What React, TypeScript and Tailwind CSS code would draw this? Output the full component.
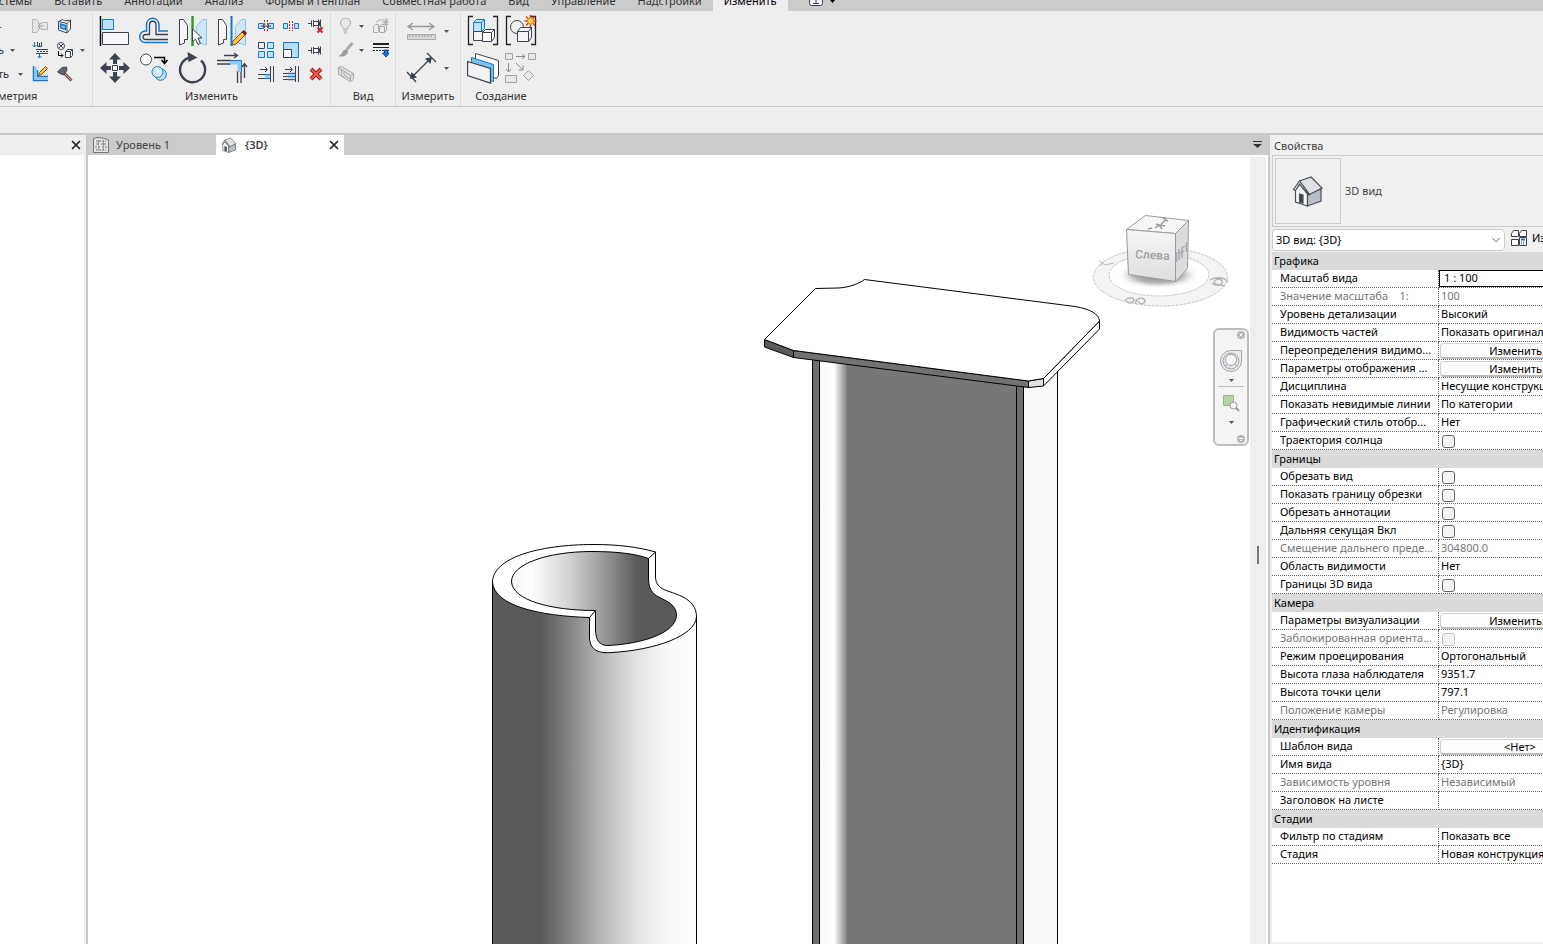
import type { ReactNode } from 'react';
import { ChevronDown, X } from 'lucide-react';

const DARK = '#3c4350';
const BLUE = '#0f7ad1';
const SKY = '#bfe3f5';
const GREY = '#a9a9a9';

interface IconProps {
  size?: 16 | 32;
  children: ReactNode;
}

const Icon = ({ size = 16, children }: IconProps) => (
  <svg
    width={size}
    height={size}
    viewBox={`0 0 ${size} ${size}`}
    fill="none"
    stroke={DARK}
    className="block shrink-0"
    aria-hidden="true"
  >
    {children}
  </svg>
);

const Tool = ({ label, children }: { label: string; children: ReactNode }) => (
  <button type="button" aria-label={label} className="block">
    {children}
  </button>
);

const Caret = ({ label = 'Ещё' }: { label?: string }) => (
  <button type="button" aria-label={label} className="flex h-4 w-2 items-center justify-center">
    <svg width="5" height="3" viewBox="0 0 5 3" fill="#555">
      <path d="M0 0h5L2.500 3z" />
    </svg>
  </button>
);

/* ---------- Geometry icons ---------- */

const CopeIcon = () => (
  <Icon>
    <path d="M.5 1.500h4l2 2v2h3v-1h6v7h-6v-1h-3v2l-2 2h-4z" stroke="#b5b5b5" fill="#e6e6e6" />
    <path d="M6 8h5M8 6 6 8l2 2" stroke="#999" />
  </Icon>
);

const CutIcon = () => (
  <Icon>
    <path d="M1.500 3.500 6 1.500l1.500 1.500 6-1v9l-3.500 4-8.500-3z" fill="#fff" />
    <path d="M10 5.500v9M1.500 3.500 10 5.500l3.500-3" />
    <path d="m3.500 6 5 1.500v4l-5-1.500z" fill="#7fc0ec" stroke={BLUE} strokeWidth="1.500" />
  </Icon>
);

const BeamIcon = () => (
  <Icon>
    <path d="M2.500 0v5M.5 3l2 2 2-2M7.500 12v4M5.500 14l2 2 2-2" stroke={BLUE} />
    <path d="M4 7.500h12M4 11.500h12" stroke={DARK} />
    <path d="M5 9.500h11" strokeDasharray="2 1" />
    <path d="M5.500 0v4.500h4V0M7.500 1v3" />
  </Icon>
);

const PaintIcon = () => (
  <Icon>
    <circle cx="4" cy="4" r="3.500" fill="#fff" />
    <path d="m2 2 4 4M6 2 2 6" />
    <path d="M1.500 9v4.500h4M4 11.500l2 2-2 2" stroke="#000" />
    <path d="M8.500 9.500 10.500 7.500h5v6l-2 2h-5z" fill="#fff" />
    <path d="M8.500 9.500h5v6M13.500 9.500l2-2" />
  </Icon>
);

const WallJoinIcon = () => (
  <Icon>
    <path d="M1.500 0v14.500H16M5.500 4v6.500H16" stroke={BLUE} strokeWidth="1.500" />
    <path d="M3.500 1v11.500H16" stroke="#7fc0ec" strokeWidth="2" />
    <path d="m6.500 9.500 1-3 6-6 2 2-6 6z" fill="#ffc64b" stroke="#7a4a12" />
  </Icon>
);

const HammerIcon = () => (
  <Icon>
    <path d="m7 7 7.500 7.500" stroke="#7a4a3c" strokeWidth="3" />
    <path d="m7 7 7 7" stroke="#dba894" />
    <path d="M.5 6 5 1.500 9.500 1 10 4 6.500 9 4 8z" fill="#5b6472" />
  </Icon>
);

/* ---------- Modify icons ---------- */

const AlignIcon = () => (
  <Icon size={32}>
    <path d="M1.500 1v30" stroke="#000" strokeWidth="1.500" />
    <path d="M3.500 4.500h11v10h-11z" fill={SKY} stroke={BLUE} />
    <path d="M3.500 17.500h26v12h-26z" fill="#f7f7f9" />
  </Icon>
);

const OffsetIcon = () => (
  <Icon size={32}>
    <path
      d="M30 27.500H7c-7 0-7-11 0-11.500h1.500V10c0-9 12.500-9 12.500 0v6H30"
      stroke={BLUE}
      strokeWidth="1.500"
    />
    <path d="M30 24.500H8c-4 0-4-5 0-5h3.500V10c0-5 6.500-5 6.500 0v9.500H30" strokeWidth="1.300" />
  </Icon>
);

const MirrorShape = () => (
  <>
    <path d="M2.500 4.500h4l4 6v14h-3v3.500l-5 2z" fill="#f6f6f8" />
    <path d="M29.500 4.500h-4l-6 7v13h3v3.500l7 2z" fill="#cfe8f7" stroke="#8cc3e6" />
  </>
);

const MirrorPickIcon = () => (
  <Icon size={32}>
    <MirrorShape />
    <path d="M15.500 1v30" stroke="#2d9a1c" strokeWidth="2.400" />
    <path d="M15.500 14v13l3-3 2.500 5.500 2.500-1-2.500-5.500h4z" fill="#fff" />
  </Icon>
);

const MirrorDrawIcon = () => (
  <Icon size={32}>
    <MirrorShape />
    <path d="M15.500 1v30" stroke={BLUE} strokeWidth="2" />
    <path d="m16 30 1-4L26 17l3 3-9 9z" fill="#ffc64b" stroke="#7a4a12" />
    <path d="m26 17 2-1.500 2.500 2.500L29 20z" fill="#8a1f1f" stroke="#7a1a1a" />
  </Icon>
);

const MoveIcon = () => (
  <Icon size={32}>
    <path
      d="m16 1 6 6.500h-4V12h-4V7.500h-4zM16 31l6-6.500h-4V20h-4v4.500h-4zM1 16l6.500-6v4H12v4H7.500v4zM31 16l-6.500-6v4H20v4h4.500v4z"
      fill={DARK}
      stroke="none"
    />
    <path d="M13.500 13.500h5v5h-5z" fill="#fff" />
  </Icon>
);

const CopyIcon = () => (
  <Icon size={32}>
    <circle cx="8" cy="7.500" r="5.500" fill="#fff" />
    <path d="M16 5.500h10.500V11M23.500 8l3 3.500 3-3.500" stroke="#000" strokeWidth="1.500" />
    <circle cx="22.500" cy="22.500" r="5.800" fill={SKY} stroke={BLUE} />
    <circle cx="19.500" cy="20" r="5.500" fill="#d9eef9" stroke={BLUE} />
  </Icon>
);

const RotateIcon = () => (
  <Icon size={32}>
    <path d="M24 8.500A12.500 12.500 0 1 1 13 5.500" strokeWidth="2.400" />
    <path d="M10.500 0 20.500 5.500 11.500 10z" fill={DARK} stroke="none" />
  </Icon>
);

const TrimIcon = () => (
  <Icon size={32}>
    <path d="M1 8.500h14M1 12h14M21.500 19v12M25 19v12" strokeWidth="1.300" />
    <path d="M14 10.500h9.500V20" stroke="#8ccbf5" strokeWidth="4" />
    <path d="M14 8.500h11.500V20" stroke={BLUE} />
    <path d="M8 3.500h13M18 1l3.500 2.500L18 6M28.500 26V12M26 15l2.500-3.500L31 15" strokeWidth="1.300" />
  </Icon>
);

const SplitIcon = () => (
  <Icon>
    <path d="M.5 5.500h5v5h-5zM10.500 5.500h5v5h-5z" fill={SKY} stroke={BLUE} />
    <path d="M6.500 2v12M9.500 2v12" stroke="#d02020" strokeDasharray="2 1" />
    <path d="M3 8h10" />
  </Icon>
);

const SplitGapIcon = () => (
  <Icon>
    <path d="M.5 5.500h4v5h-4zM11.500 5.500h4v5h-4z" fill={SKY} stroke={BLUE} />
    <path d="M6.500 3v10M9.500 3v10" stroke="#d02020" strokeDasharray="2 1" />
  </Icon>
);

const Pin = () => (
  <>
    <path d="M5.500 6.500h6v4h-6z" fill="#f4f4f4" />
    <path d="M0 8.500h3.500M3.500 5.500v6M5.500 5v7M10.500 4.500v8M12.500 4.500v8" />
  </>
);

const UnpinIcon = () => (
  <Icon>
    <g transform="translate(0 -3)">
      <Pin />
    </g>
    <path d="m9.500 9.500 5 5M14.500 9.500l-5 5" stroke="#cf1f1f" strokeWidth="2" />
  </Icon>
);

const PinIcon = () => (
  <Icon>
    <Pin />
  </Icon>
);

const ArrayIcon = () => (
  <Icon>
    <path d="M.5.5h6v6h-6z" />
    <path d="M9.500.5h6v6h-6zM.5 9.500h6v6h-6zM9.500 9.500h6v6h-6z" fill={SKY} stroke={BLUE} />
  </Icon>
);

const ScaleIcon = () => (
  <Icon>
    <path d="M.5.5h15v15H.5z" fill="#b4ddf5" stroke={BLUE} />
    <path d="M.5 7.500h8v8h-8z" fill="#fff" />
  </Icon>
);

const ExtendIcon = () => (
  <Icon>
    <path d="M2 3.500h7M7 1l2.500 2.500L7 6M12.500 0v16M15.500 0v16M0 8.500h7M0 12.500h7" />
    <path d="M7 8.500h5M7 12.500h5" stroke={BLUE} />
    <path d="M7 10.500h5" stroke="#8ccbf5" strokeWidth="3" />
  </Icon>
);

const ExtendManyIcon = () => (
  <Icon>
    <path d="M2 3.500h7M7 1l2.500 2.500L7 6M12.500 0v16M15.500 0v16M0 7.500h5M0 10.500h5M0 13.500h5" />
    <path d="M5 7.500h7M5 10.500h7M5 13.500h7" stroke={BLUE} strokeWidth="1.500" />
  </Icon>
);

const DeleteIcon = () => (
  <Icon>
    <path d="m3 3 10 10M13 3 3 13" stroke="#a01818" strokeWidth="4" />
    <path d="m3 3 10 10M13 3 3 13" stroke="#f0584e" strokeWidth="2" />
  </Icon>
);

/* ---------- View, measure and create icons ---------- */

const BulbIcon = () => (
  <Icon>
    <path d="M5.500 11c0-2-3-3-3-6a5 5 0 0 1 10 0c0 3-3 4-3 6zM5.500 13h4M6 15h3" stroke={GREY} fill="#e8e8e8" />
  </Icon>
);

const DisplaceIcon = () => (
  <Icon>
    <path d="M.5 8.500 2.500 6.500h3v7l-1 1h-4zM6.500 8.500l2-2h5v6l-2 2h-5zM6.500 8.500h5v6M3 4.500 6 2h3" stroke={GREY} />
    <path d="M13 0v8M9 4h7M10 1l5 6M15 1l-5 6" stroke="#aaa" />
  </Icon>
);

const BrushIcon = () => (
  <Icon>
    <path d="m14.500 1-6 7" stroke={GREY} strokeWidth="3" />
    <path d="M8 7.500c-4 0-3 5-7.500 6.500 4 1.500 9 0 9.500-4.500z" fill="#9b9b9b" stroke="none" />
  </Icon>
);

const LineworkIcon = () => (
  <Icon>
    <path d="M0 2h16" stroke="#222" strokeWidth="2" />
    <path d="M0 5.500h16" stroke="#222" />
    <path d="M0 8.500h16" stroke="#222" strokeDasharray="2 1" />
    <path d="M11.500 8h3v3h2L13 15l-3.500-4h2z" fill={BLUE} stroke="#0b4f9c" />
  </Icon>
);

const SectionBoxIcon = () => (
  <Icon>
    <path d="M.5 1.500 3.500 0.500l12 7v6l-3 2-12-7zM.5 1.500l12 8v6M12.500 9.500l3-2M3.500 3.500v6l3 2M6 5v4l6 4" stroke={GREY} fill="#e0e0e0" />
  </Icon>
);

const MeasureIcon = () => (
  <Icon size={32}>
    <path d="M3 11.500h26M8 8l-5 3.500L8 15M24 8l5 3.500-5 3.500" stroke="#999" strokeWidth="1.300" />
    <path d="M2.500 19.500h28v5h-28z" fill="#d9d9d9" stroke={GREY} />
    <path d="M5 20v2M8 20v2M11 20v2M14 20v2M17 20v2M20 20v2M23 20v2M26 20v2" stroke="#999" />
  </Icon>
);

const DimensionIcon = () => (
  <Icon size={32}>
    <path d="m6 26 20-20M2 20l9 10M22 1l9 9" strokeWidth="1.300" />
    <path d="m5 27 1.500-7 5.500 5.500zM27 5l-7 1.500 5.500 5.500z" fill={DARK} stroke="none" />
  </Icon>
);

const Brackets = () => (
  <path d="M6 1.500H1.500v28H6M26 1.500h4.500v28H26" stroke="#222" strokeWidth="1.300" />
);

const GroupIcon = () => (
  <Icon size={32}>
    <Brackets />
    <path d="m6.500 7.500 3-3h8v9l-3 3h-8z" fill={SKY} stroke={BLUE} />
    <path d="M6.500 7.500h8v9M14.500 7.500l3-3" stroke={BLUE} />
    <path d="M6.500 16.500h9v9h-9z" fill="#f4f4f6" />
    <path d="m15.500 17.500 3-3h9v8l-3 4h-9z" fill="#fff" />
    <path d="M15.500 17.500h9v9M24.500 17.500l3-3" />
  </Icon>
);

const AssemblyIcon = () => (
  <Icon size={32}>
    <Brackets />
    <circle cx="12" cy="12" r="6.500" fill="#f1f1f4" />
    <path d="m12.500 16.500 3-4h11v10l-3 4h-11z" fill="#f4f4f6" />
    <path d="M12.500 16.500h11v10M23.500 16.500l3-4" />
    <path d="M25.500 0v12M19.500 6h12M21 1.500l9 9M30 1.500l-9 9" stroke="#d8401a" strokeWidth="1.500" />
    <circle cx="25.500" cy="6" r="3" fill="#ffd83a" stroke="#ef7a1a" />
  </Icon>
);

const PartsIcon = () => (
  <Icon size={32}>
    <path d="m8.500 1.500 23 7v15l-2 3-21-7z" fill="#fff" />
    <path d="m4.500 5.500 22 7v17l-22-7z" fill="#7cc2f0" stroke={BLUE} />
    <path d="m.5 9.500 23 7V31l-23-7.500z" fill="#f3f3f5" strokeWidth="1.300" />
  </Icon>
);

const SimilarIcon = () => (
  <Icon size={32}>
    <g stroke="#a3a3a3">
      <path d="M.5 1.500h7v6h-7zM23.500 1.500h7v6h-7zM.5 23.500h11v7H.5zM23.500 18.500l5 5-5 5-5-5z" fill="#e8e8e8" />
      <path d="M11 4.500h9M17 2l3 2.500L17 7M3.500 11v9M1 17l2.500 3L6 17M11 11l7 7M18 13.500V18h-4.500" stroke="#8c8c8c" />
    </g>
  </Icon>
);

/* ---------- Shared glyphs ---------- */

const HouseIcon = ({ className }: { className: string }) => (
  <svg viewBox="0 0 32 32" className={className} fill="none" stroke="#4a4f58" strokeWidth="1.200">
    <path d="M3.500 14.500v12.500l12 4V19L8 9z" fill="#f8f8fa" />
    <path d="M15.500 18.500V31L29 26V14z" fill="#b9bec8" />
    <path d="M7.500 6 19 2l11 11-12.500 6.500z" fill="#dfe1e6" />
    <path d="M7.500 6 1.500 14.500l2 1 4-6.500 9 11 1-.5z" fill="#fff" />
    <path d="M7.500 19l3.500 1v8l-3.500-1z" fill="#3c4350" />
  </svg>
);

const PlanIcon = () => (
  <Icon>
    <g stroke="#777">
      <path d="M.5 15.500V1.500L4 .5l6 .5 5.500 2v12.500z" fill="#e4e4e4" />
      <path d="M3 4h10M3 7h3M8 7h6M2 10h5M9 10h5M3 13h10" strokeDasharray="2 1" />
      <path d="M5.500 3v10M10.500 3v11" stroke="#999" />
    </g>
  </Icon>
);

/* ---------- Ribbon ---------- */

const ribbonTabs = [
  'Системы',
  'Вставить',
  'Аннотации',
  'Анализ',
  'Формы и генплан',
  'Совместная работа',
  'Вид',
  'Управление',
  'Надстройки',
];

const RibbonTabs = () => (
  <nav className="flex h-[11px] items-end overflow-hidden bg-[#cbcbcb] text-[#333]">
    <div className="-ml-[26px] flex shrink-0">
      {ribbonTabs.map((tab) => (
        <button key={tab} type="button" className="h-5 px-[11px] leading-4 whitespace-nowrap">
          {tab}
        </button>
      ))}
    </div>
    <button type="button" className="h-5 bg-[#eee] px-[11px] leading-4 text-black">
      Изменить
    </button>
    <button type="button" aria-label="Свернуть ленту" className="ml-5 flex h-5 items-center gap-1.5">
      <svg width="16" height="14" viewBox="0 0 16 14" fill="#f4f6fa" stroke={DARK}>
        <rect x="1.500" y=".5" width="13" height="11" rx="2" />
        <path d="M8 4v5M5 9.500h6" />
      </svg>
      <svg width="5" height="3" viewBox="0 0 5 3">
        <path d="M0 0h5L2.500 3z" />
      </svg>
    </button>
  </nav>
);

interface GroupProps {
  title: string;
  className: string;
  children: ReactNode;
}

const Group = ({ title, className, children }: GroupProps) => (
  <section className={`flex shrink-0 flex-col ${className}`}>
    <div className="flex h-[75px]">{children}</div>
    <h2 className="text-center leading-4">{title}</h2>
  </section>
);

const Ribbon = () => (
  <div className="flex h-24 overflow-hidden border-b border-[#c8c8c8] bg-[#eee] pt-0.5 text-[#333]">
    <section className="flex w-[93px] shrink-0 flex-col border-r border-[#dcdcdc]">
      <div className="-ml-0.5 flex h-[75px] pt-[5px]">
        <div className="flex w-[34px] flex-col gap-2">
          <span className="h-4 leading-4">-</span>
          <span className="flex h-4 items-center justify-between pr-4 leading-4">
            ь<Caret />
          </span>
          <span className="flex h-4 items-center justify-between pr-2 leading-4">
            ть<Caret />
          </span>
        </div>
        <div className="grid h-16 grid-cols-[25px_16px_18px] gap-y-2">
          <Tool label="Врезка"><CopeIcon /></Tool>
          <Tool label="Вырезать"><CutIcon /></Tool>
          <span />
          <Tool label="Соединение балок"><BeamIcon /></Tool>
          <Tool label="Краска"><PaintIcon /></Tool>
          <span className="flex justify-center"><Caret /></span>
          <Tool label="Соединение стен"><WallJoinIcon /></Tool>
          <Tool label="Разобрать"><HammerIcon /></Tool>
        </div>
      </div>
      <h2 className="-ml-0.5 leading-4">метрия</h2>
    </section>

    <Group title="Изменить" className="w-[238px] border-r border-[#dcdcdc]">
      <div className="grid h-[70px] grid-cols-[39px_39px_39px_39px] gap-y-[5px] pt-0.5 pl-1.5">
        <Tool label="Выровнять"><AlignIcon /></Tool>
        <Tool label="Смещение"><OffsetIcon /></Tool>
        <Tool label="Зеркало: выбрать ось"><MirrorPickIcon /></Tool>
        <Tool label="Зеркало: нарисовать ось"><MirrorDrawIcon /></Tool>
        <Tool label="Перенести"><MoveIcon /></Tool>
        <Tool label="Копировать"><CopyIcon /></Tool>
        <Tool label="Повернуть"><RotateIcon /></Tool>
        <Tool label="Обрезать до угла"><TrimIcon /></Tool>
      </div>
      <div className="grid h-[69px] grid-cols-[25px_25px_16px] gap-y-2 pt-[5px] pl-[3px]">
        <Tool label="Разделить"><SplitIcon /></Tool>
        <Tool label="Разделить с зазором"><SplitGapIcon /></Tool>
        <Tool label="Открепить"><UnpinIcon /></Tool>
        <Tool label="Массив"><ArrayIcon /></Tool>
        <Tool label="Масштаб"><ScaleIcon /></Tool>
        <Tool label="Прикрепить"><PinIcon /></Tool>
        <Tool label="Удлинить"><ExtendIcon /></Tool>
        <Tool label="Удлинить несколько"><ExtendManyIcon /></Tool>
        <Tool label="Удалить"><DeleteIcon /></Tool>
      </div>
    </Group>

    <Group title="Вид" className="w-[65px] border-r border-[#dcdcdc]">
      <div className="grid h-[69px] grid-cols-[19px_16px_16px] gap-y-2 pt-[5px] pl-[7px]">
        <Tool label="Скрыть"><BulbIcon /></Tool>
        <Caret />
        <Tool label="Сместить"><DisplaceIcon /></Tool>
        <Tool label="Переопределить"><BrushIcon /></Tool>
        <Caret />
        <Tool label="Вид линий"><LineworkIcon /></Tool>
        <Tool label="Границы"><SectionBoxIcon /></Tool>
      </div>
    </Group>

    <Group title="Измерить" className="w-[65px] border-r border-[#dcdcdc]">
      <div className="grid h-[71px] grid-cols-[37px_8px] items-center gap-y-[5px] pt-0.5 pl-[9px]">
        <Tool label="Измерить расстояние"><MeasureIcon /></Tool>
        <Caret />
        <Tool label="Размер"><DimensionIcon /></Tool>
        <Caret />
      </div>
    </Group>

    <Group title="Создание" className="w-20">
      <div className="grid h-[71px] grid-cols-[38px_32px] gap-y-[5px] pt-0.5 pl-1.5">
        <Tool label="Создать группу"><GroupIcon /></Tool>
        <Tool label="Создать сборку"><AssemblyIcon /></Tool>
        <Tool label="Создать части"><PartsIcon /></Tool>
        <Tool label="Создать похожий"><SimilarIcon /></Tool>
      </div>
    </Group>
  </div>
);

/* ---------- Drawing area ---------- */

const Model = () => (
  <svg className="block h-full w-full" fill="none" stroke="#000" aria-label="3D модель">
    <defs>
      <linearGradient id="pipeOuter" gradientUnits="userSpaceOnUse" x1="492" x2="697" y1="0" y2="0">
        <stop offset="0" stopColor="#5a5a5a" />
        <stop offset=".24" stopColor="#5a5a5a" />
        <stop offset=".4" stopColor="#8c8c8c" />
        <stop offset=".55" stopColor="#bcbcbc" />
        <stop offset=".72" stopColor="#e6e6e6" />
        <stop offset=".88" stopColor="#fafafa" />
        <stop offset="1" stopColor="#fff" />
      </linearGradient>
      <linearGradient id="pipeInner" gradientUnits="userSpaceOnUse" x1="511" x2="677" y1="0" y2="0">
        <stop offset="0" stopColor="#f4f4f4" />
        <stop offset=".12" stopColor="#fff" />
        <stop offset=".35" stopColor="#d2d2d2" />
        <stop offset=".55" stopColor="#9c9c9c" />
        <stop offset=".76" stopColor="#5a5a5a" />
        <stop offset="1" stopColor="#5a5a5a" />
      </linearGradient>
      <linearGradient id="web" gradientUnits="userSpaceOnUse" x1="820" x2="848" y1="0" y2="0">
        <stop offset="0" stopColor="#fafafa" />
        <stop offset=".5" stopColor="#fff" />
        <stop offset="1" stopColor="#777" />
      </linearGradient>
      <radialGradient id="cubeShadow">
        <stop offset="0" stopColor="#777" />
        <stop offset=".6" stopColor="#bbb" />
        <stop offset="1" stopColor="#fff" stopOpacity="0" />
      </radialGradient>
      <linearGradient id="cubeFace" x1="0" x2="0" y1="0" y2="1">
        <stop offset="0" stopColor="#f6f6f6" />
        <stop offset="1" stopColor="#dedede" />
      </linearGradient>
    </defs>

    <g transform="translate(-88 -155)">
      {/* Pipe */}
      <path d="M492.500 582V2000H696.500V616L640 600H520z" fill="url(#pipeOuter)" />
      <path
        d="M492.500 582C493 558 538 544.500 594 544.500C618 544.500 638 547 655.500 552V577C656 591 669 590 682 596.500C691 601 696.500 607 696.500 617C695 636 655 650 612 652.500C596 654 589.500 648 589.500 637V617.500C540 616 494 606 492.500 582z"
        fill="#fff"
      />
      <path
        d="M648.500 558.500C636 554 618 551.500 592 551.500C548 551.500 511 564 511.500 582C513 600 550 610.500 595.500 610.500V630C596 640 599 645.500 608 645.500C640 644 676 634 676.500 615C676 603 664 600.500 656 595.500C650 591 648.500 586 648.500 577z"
        fill="url(#pipeInner)"
      />
      <path d="m648.500 558.500 7-6.500M589.500 617.500l6-7" />

      {/* Column */}
      <path d="M1024 340h33.500v1660H1024z" fill="#fafafa" stroke="none" />
      <path d="M812 355h8v1700h-8zM1017 370h7v1700h-7z" fill="#6e6e6e" stroke="none" />
      <path d="M820 355h28v1700h-28z" fill="url(#web)" stroke="none" />
      <path d="M847 355h170v1700H847z" fill="#777" stroke="none" />
      <path
        d="M812.500 355v1700M819.500 355v1700M1016.500 370v1700M1023.500 370v1700M1057.500 370v1700"
        shapeRendering="crispEdges"
      />

      {/* Base plate */}
      <path d="M764.500 339.500V347L793.500 357.500V350.500z" fill="#5a5a5a" />
      <path d="M793.500 350.500V357.500L1028.500 387.500V381z" fill="#727272" />
      <path d="M1028.500 381V387.500L1043.500 386V378.500z" fill="#e2e2e2" />
      <path d="M1043.500 378.500V386L1099.500 329V321z" fill="#fff" />
      <path
        d="M764.500 339.500L815.500 288.500L838 288C850 287.500 860 283 864.500 279.500L1075 306.500C1090 309 1099 314 1099.500 321L1043.500 378.500L1028.500 381L793.500 350.500z"
        fill="#fff"
      />

      {/* View cube */}
      <ellipse cx="1160.500" cy="277" rx="67" ry="29" fill="#f4f4f4" stroke="#c4c4c4" strokeDasharray="3 1" />
      <ellipse cx="1159" cy="275" rx="50" ry="21" fill="#fff" stroke="#c4c4c4" strokeDasharray="3 1" />
      <ellipse cx="1158" cy="275" rx="42" ry="14" fill="url(#cubeShadow)" stroke="none" />
      <g stroke="#9a9a9a">
        <path d="M1126.500 229.500L1145.500 215.500L1188.500 220.500L1175.500 233.500z" fill="#f6f6f6" />
        <path d="M1126.500 229.500L1175.500 233.500V281.500L1128.500 274.500z" fill="url(#cubeFace)" />
        <path d="M1175.500 233.500L1188.500 220.500L1187.500 268.500L1175.500 281.500z" fill="#dcdcdc" />
        <path d="M1155 228l4-3-3-1M1160 225l5 1M1161 224l5-4 2 1M1162 229l-3-4M1148 229l4-1M1163 219l3-1" strokeWidth="1.500" />
        <path d="M1099 261l6 4 9-2M1100 266l4-4" stroke="#bbb" />
        <path d="M1125 301c2-4 9-4 9-1s-8 4-6 1M1136 304c-2-6 8-8 9-3 0 4-8 3-6 0" stroke="#b5b5b5" strokeWidth="1.500" />
        <path d="M1210 280c6-4 14-2 16 0M1212 283c4 4 12 2 10-2s-10-1-7 3l10 2M1225 279l3 3" stroke="#b5b5b5" strokeWidth="1.500" />
      </g>
      <text
        x="1135"
        y="259"
        fontSize="12"
        fontWeight="500"
        fill="#9aa0a6"
        stroke="none"
        transform="rotate(3 1150 259)"
        className="font-['Roboto',sans-serif]"
      >
        Слева
      </text>
      <path d="M1176.500 262v-10M1179 260v-11M1179 254l3-2M1182 258v-10l3-2M1182 252l2-1M1186.500 252v-10" stroke="#a5a9ae" strokeWidth="1.500" />
    </g>
  </svg>
);

const NavigationBar = () => (
  <div className="absolute top-[173px] right-px flex h-[118px] w-9 flex-col items-center rounded-md border-2 border-[#bdbdbd] bg-[#f4f4f4]">
    <button type="button" aria-label="Закрыть" className="mt-px mr-0.5 self-end">
      <svg width="8" height="8" viewBox="0 0 8 8" stroke="#fff">
        <circle cx="4" cy="4" r="4" fill="#b5b5b5" stroke="none" />
        <path d="m2.500 2.500 3 3M5.500 2.500l-3 3" />
      </svg>
    </button>
    <button type="button" aria-label="Штурвал" className="mt-2.5">
      <svg width="24" height="24" viewBox="0 0 24 24" fill="#eceef0" stroke="#a0a4a8">
        <path d="M12 1.500h10.500V12A10.500 10.500 0 1 1 12 1.500z" />
        <circle cx="12" cy="12" r="8" fill="#e4e6e9" />
        <circle cx="12" cy="11" r="5.500" fill="#f8f8f8" />
        <path d="m8 15-2 3M16 15l2 3" />
      </svg>
    </button>
    <span className="mt-px flex h-3 items-center"><Caret /></span>
    <hr className="w-[26px] border-[#bdbdbd]" />
    <button type="button" aria-label="Зумирование" className="mt-[7px]">
      <svg width="18" height="18" viewBox="0 0 18 18">
        <path d="M1.500 1.500h10v10h-10z" fill="#b9d3a8" stroke="#8eb87c" />
        <circle cx="11.500" cy="11.500" r="3.500" fill="#f8f8f8" stroke="#999" />
        <path d="m14 14 3 3" stroke="#999" strokeWidth="2" />
      </svg>
    </button>
    <span className="mt-1 flex h-3 items-center"><Caret /></span>
    <button type="button" aria-label="Параметры" className="mt-auto mr-0.5 mb-px self-end">
      <svg width="8" height="8" viewBox="0 0 8 8" stroke="#fff">
        <circle cx="4" cy="4" r="4" fill="#b5b5b5" stroke="none" />
        <path d="M2 3.500h4M3 5.500h2" />
      </svg>
    </button>
  </div>
);

const Workspace = () => (
  <main className="flex min-w-0 flex-1 flex-col">
    <div className="flex h-5 items-center bg-[#cbcbcb] text-[#444]">
      <button type="button" className="flex h-5 w-32 items-center gap-[7px] pl-[5px] leading-5">
        <PlanIcon />
        Уровень 1
      </button>
      <div className="flex h-5 w-32 items-center justify-between bg-white pr-[3px] pl-[5px] font-semibold">
        <button type="button" className="flex items-center gap-2 leading-5">
          <HouseIcon className="h-4 w-4" />
          {'{3D}'}
        </button>
        <button type="button" aria-label="Закрыть вид">
          <X className="h-3.5 w-3.5 text-[#222]" strokeWidth={3} />
        </button>
      </div>
      <button type="button" aria-label="Список видов" className="mr-1.5 ml-auto">
        <svg width="9" height="8" viewBox="0 0 9 8" fill="#333">
          <path d="M0 0h9v1H0zM0 3h9L4.500 7z" />
        </svg>
      </button>
    </div>
    <div className="flex flex-1 bg-white">
      <div className="relative min-w-0 flex-1 overflow-hidden">
        <div className="absolute inset-0">
          <Model />
        </div>
        <NavigationBar />
      </div>
      <div className="mt-0.5 mr-0.5 flex w-4 items-center justify-center bg-[#efefef] pt-2">
        <span className="h-[18px] w-0.5 bg-[#777]" />
      </div>
    </div>
  </main>
);

/* ---------- Properties palette ---------- */

interface Property {
  name: string;
  value?: string;
  kind?: 'text' | 'input' | 'button' | 'check';
  disabled?: boolean;
}

const sections: { title: string; rows: Property[] }[] = [
  {
    title: 'Графика',
    rows: [
      { name: 'Масштаб вида', value: '1 : 100', kind: 'input' },
      { name: 'Значение масштаба    1:', value: '100', disabled: true },
      { name: 'Уровень детализации', value: 'Высокий' },
      { name: 'Видимость частей', value: 'Показать оригинал' },
      { name: 'Переопределения видимо...', value: 'Изменить...', kind: 'button' },
      { name: 'Параметры отображения ...', value: 'Изменить...', kind: 'button' },
      { name: 'Дисциплина', value: 'Несущие конструкции' },
      { name: 'Показать невидимые линии', value: 'По категории' },
      { name: 'Графический стиль отобр...', value: 'Нет' },
      { name: 'Траектория солнца', kind: 'check' },
    ],
  },
  {
    title: 'Границы',
    rows: [
      { name: 'Обрезать вид', kind: 'check' },
      { name: 'Показать границу обрезки', kind: 'check' },
      { name: 'Обрезать аннотации', kind: 'check' },
      { name: 'Дальняя секущая Вкл', kind: 'check' },
      { name: 'Смещение дальнего преде...', value: '304800.0', disabled: true },
      { name: 'Область видимости', value: 'Нет' },
      { name: 'Границы 3D вида', kind: 'check' },
    ],
  },
  {
    title: 'Камера',
    rows: [
      { name: 'Параметры визуализации', value: 'Изменить...', kind: 'button' },
      { name: 'Заблокированная ориента...', kind: 'check', disabled: true },
      { name: 'Режим проецирования', value: 'Ортогональный' },
      { name: 'Высота глаза наблюдателя', value: '9351.7' },
      { name: 'Высота точки цели', value: '797.1' },
      { name: 'Положение камеры', value: 'Регулировка', disabled: true },
    ],
  },
  {
    title: 'Идентификация',
    rows: [
      { name: 'Шаблон вида', value: '<Нет>', kind: 'button' },
      { name: 'Имя вида', value: '{3D}' },
      { name: 'Зависимость уровня', value: 'Независимый', disabled: true },
      { name: 'Заголовок на листе', value: '' },
    ],
  },
  {
    title: 'Стадии',
    rows: [
      { name: 'Фильтр по стадиям', value: 'Показать все' },
      { name: 'Стадия', value: 'Новая конструкция' },
    ],
  },
];

const PropertyValue = ({ id, row }: { id: string; row: Property }) => {
  if (row.kind === 'check') {
    return (
      <input
        id={id}
        type="checkbox"
        disabled={row.disabled}
        className="mt-[3px] ml-[3px] h-[13px] w-[13px] appearance-none rounded-[3px] border border-[#666] bg-[#f5f5f5] disabled:border-[#c4c4c4]"
      />
    );
  }
  if (row.kind === 'button') {
    return (
      <button
        id={id}
        type="button"
        className="mt-px ml-px h-4 w-40 rounded-sm border border-b-2 border-[#d0d0d0] border-b-[#bbb] bg-[#fdfdfd] leading-[14px]"
      >
        {row.value}
      </button>
    );
  }
  if (row.kind === 'input') {
    return (
      <input
        id={id}
        defaultValue={row.value}
        className="h-[17px] w-40 border border-black bg-white px-1 pb-0.5 leading-4 outline-none"
      />
    );
  }
  return <output id={id} className="h-4 pl-0.5 leading-4">{row.value}</output>;
};

const PropertyTable = () => (
  <table className="w-[328px] table-fixed border-separate border-spacing-0 text-left">
    <colgroup>
      <col className="w-[167px]" />
      <col />
    </colgroup>
    {sections.map((section, s) => (
      <tbody key={section.title}>
        <tr className="h-[18px] bg-[#dadada]">
          <th colSpan={2} className="p-0 pl-0.5 leading-[18px] font-normal">
            {section.title}
          </th>
        </tr>
        {section.rows.map((row, r) => {
          const id = `prop-${s}-${r}`;
          return (
            <tr key={row.name} className={row.disabled ? 'h-[18px] text-[#777]' : 'h-[18px]'}>
              <th className="border-r border-b border-dotted border-[#666] p-0 pl-2 align-top font-normal">
                <label htmlFor={id} className="block h-[17px] overflow-hidden leading-4 whitespace-pre">
                  {row.name}
                </label>
              </th>
              <td className="border-b border-dotted border-[#666] p-0 align-top whitespace-nowrap">
                <div className="flex h-[17px] items-start">
                  <PropertyValue id={id} row={row} />
                </div>
              </td>
            </tr>
          );
        })}
      </tbody>
    ))}
  </table>
);

const PropertiesPanel = () => (
  <aside className="flex w-[275px] shrink-0 flex-col overflow-hidden border-l-2 border-[#c8c8c8] bg-[#f0f0f0] pl-0.5">
    <h2 className="h-5 pl-0.5 leading-[22px] text-[#444]">Свойства</h2>
    <div className="flex h-[72px] w-[340px] items-center gap-1 border border-[#ccc] pl-0.5 text-[#444]">
      <div className="flex h-[66px] w-[66px] items-center justify-center border border-[#ccc]">
        <HouseIcon className="h-8 w-8" />
      </div>
      3D вид
    </div>
    <div className="flex h-[25px] w-[340px] items-center">
      <div className="relative">
        <select
          aria-label="Тип вида"
          className="block h-[22px] w-[233px] appearance-none rounded-sm border border-[#ccc] bg-white pl-[3px] leading-5"
        >
          <option>{'3D вид: {3D}'}</option>
        </select>
        <ChevronDown className="pointer-events-none absolute top-1 right-0.5 h-3.5 w-3.5 text-[#555]" strokeWidth={1.5} />
      </div>
      <button type="button" className="ml-1.5 flex items-center gap-[5px] pb-1 whitespace-nowrap">
        <Icon>
          <path d="M.5 3.500 2.500.5h5v6h-7zM8.500 3.500l2-3h5v6h-7zM.5 9.500h7v6h-7z" fill="#fff" />
          <path d="M8.500 7.500h7v8h-7z" fill="#fff" />
          <path d="M10 9.500h4" stroke={BLUE} strokeWidth="2" />
          <path d="M10 12h4M10 14h4" strokeDasharray="1 1" />
        </Icon>
        Изменить тип
      </button>
    </div>
    <div className="mb-0.5 flex-1 bg-white">
      <PropertyTable />
    </div>
  </aside>
);

export default function App() {
  return (
    <div className="flex min-h-screen flex-col overflow-hidden bg-[#eee] font-['Noto_Sans','Open_Sans',sans-serif] text-[11px] leading-4 text-black">
      <RibbonTabs />
      <Ribbon />
      <div className="h-[26px] shrink-0" />
      <div className="flex flex-1 border-t-2 border-[#c8c8c8]">
        <aside className="flex w-[88px] shrink-0 flex-col border-r-2 border-[#c8c8c8]">
          <div className="flex h-5 items-center justify-end pr-[3px]">
            <button type="button" aria-label="Закрыть панель">
              <X className="h-3.5 w-3.5 text-[#222]" strokeWidth={3} />
            </button>
          </div>
          <div className="mr-0.5 flex-1 bg-white" />
        </aside>
        <Workspace />
        <PropertiesPanel />
      </div>
    </div>
  );
}
